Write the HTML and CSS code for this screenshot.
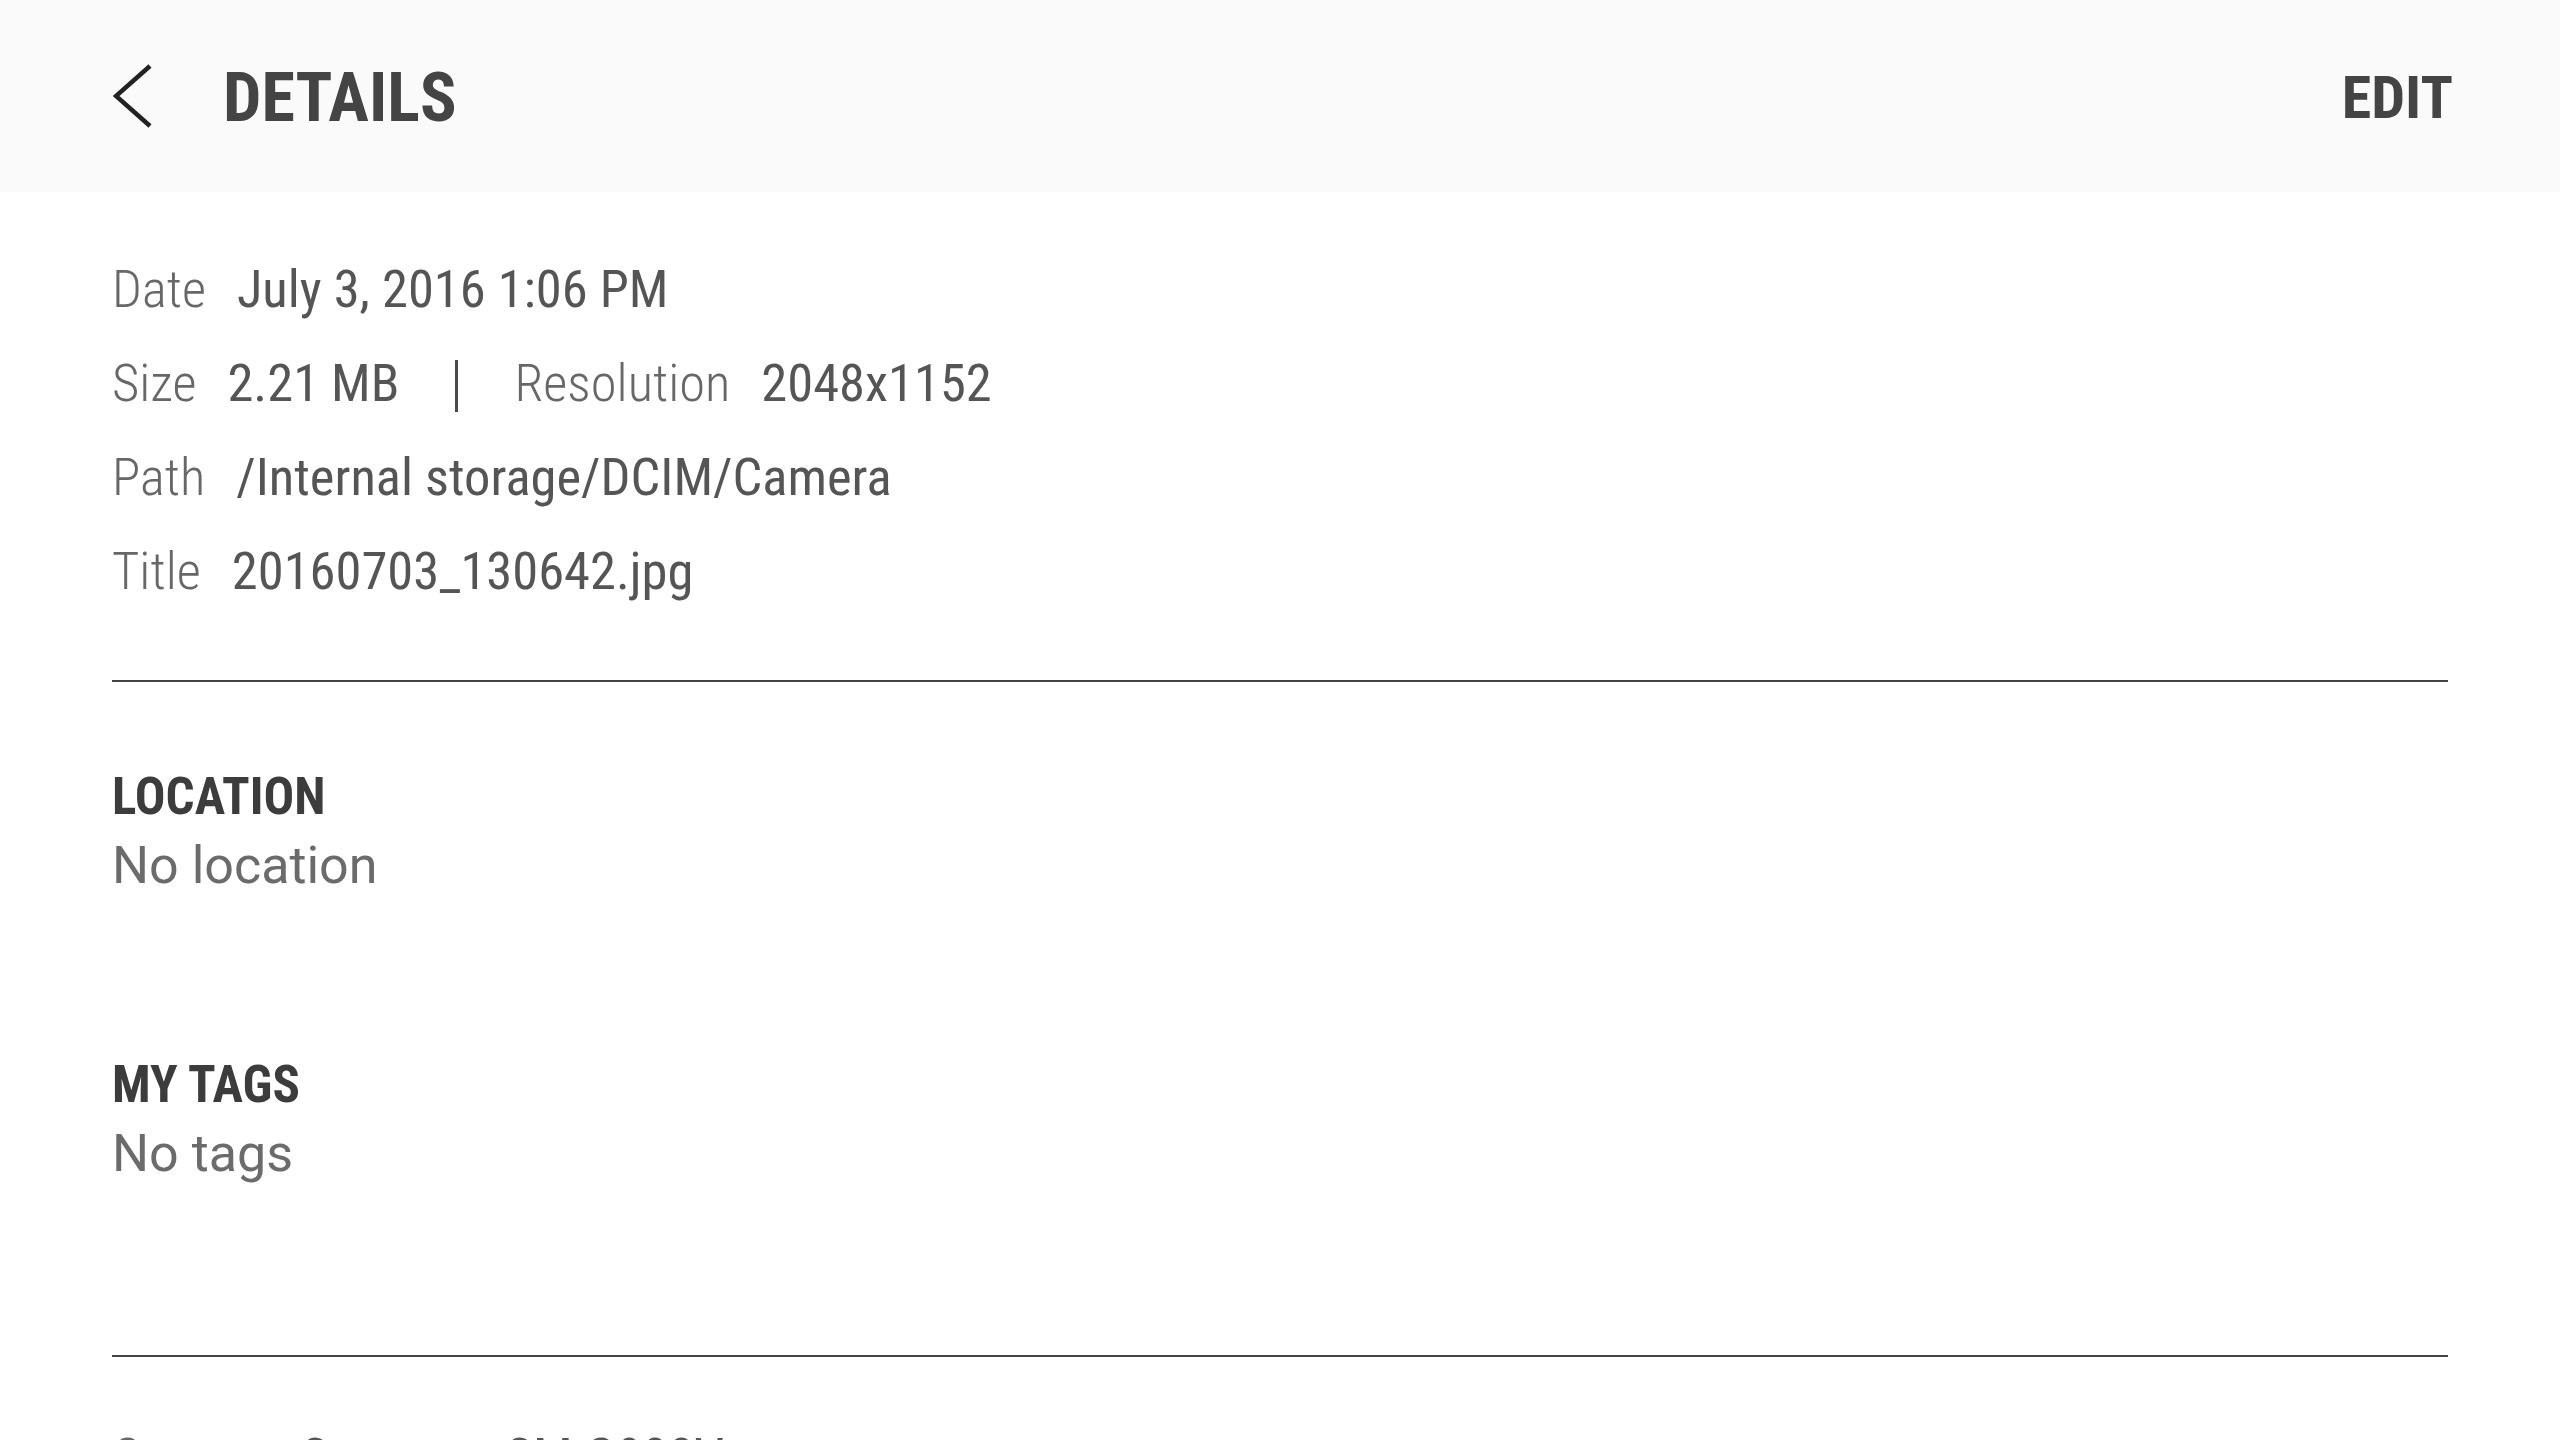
FILE: index.html
```html
<!DOCTYPE html>
<html lang="en">
<head>
<meta charset="utf-8">
<title>Details</title>
<link rel="stylesheet" href="styles.css">
</head>
<body>
<header class="appbar">
  <div class="appbar-left">
    <svg class="back" viewBox="0 0 40 64" width="40" height="64" aria-hidden="true">
      <polyline points="37,2 3,32 37,62" fill="none" stroke="#222" stroke-width="4.5" stroke-linejoin="miter"/>
    </svg>
    <h1 class="title">DETAILS</h1>
  </div>
  <div class="edit">EDIT</div>
</header>
<main class="content">
  <section class="info">
    <div class="row"><span class="label">Date</span><span class="value">July 3, 2016 1:06 PM</span></div>
    <div class="row"><span class="label">Size</span><span class="value">2.21 MB</span><span class="sep"></span><span class="label">Resolution</span><span class="value">2048x1152</span></div>
    <div class="row"><span class="label">Path</span><span class="value">/Internal storage/DCIM/Camera</span></div>
    <div class="row"><span class="label">Title</span><span class="value">20160703_130642.jpg</span></div>
  </section>
  <hr class="divider">
  <section class="block">
    <h2 class="block-title">LOCATION</h2>
    <p class="block-value">No location</p>
  </section>
  <section class="block block-last">
    <h2 class="block-title">MY TAGS</h2>
    <p class="block-value">No tags</p>
  </section>
  <hr class="divider">
  <section class="info info-camera">
    <div class="row"><span class="label">Camera</span><span class="value">Samsung SM-G930V</span></div>
  </section>
</main>
</body>
</html>
```
FILE: styles.css
```css
html, body {
  margin: 0;
  padding: 0;
  height: 1440px;
  overflow: hidden;
  background: #ffffff;
}

body {
  font-family: "Roboto Condensed", Roboto, "Liberation Sans", sans-serif;
  font-stretch: condensed;
  color: #555555;
}

.appbar {
  height: 192px;
  background: #fafafa;
  display: flex;
  align-items: center;
  justify-content: space-between;
  padding: 0 107px 0 114px;
  box-sizing: border-box;
}

.appbar-left {
  display: flex;
  align-items: center;
}

.back {
  display: block;
  width: 40px;
  height: 64px;
  margin-left: -1px;
}

.title {
  margin: 5px 0 0 70px;
  font-size: 68px;
  font-weight: 700;
  color: #444444;
  line-height: 1.172;
}

.edit {
  margin-top: 5px;
  font-size: 60px;
  font-weight: 700;
  color: #444444;
  line-height: 1.172;
}

.content {
  padding: 0 112px;
}

.info {
  padding-top: 50px;
}

.info-camera {
  padding-top: 53px;
}

.row {
  display: flex;
  align-items: baseline;
  height: 94px;
  line-height: 94px;
  font-size: 52.5px;
  white-space: nowrap;
}

.label {
  font-weight: 300;
  color: #676767;
}

.value {
  font-weight: 400;
  color: #555555;
  margin-left: 31px;
}

.sep {
  display: inline-block;
  width: 3px;
  height: 52px;
  background: #4a4a4a;
  margin: 0 56px;
  align-self: center;
  transform: translateY(3px);
}

.divider {
  margin: 62px 0 0;
  border: 0;
  height: 2px;
  background: #444444;
}

.block {
  padding-top: 83px;
  padding-bottom: 72px;
}

.block-last {
  padding-bottom: 169px;
}

.block-last + .divider {
  margin-top: 0;
}

.block-title {
  margin: 0;
  font-size: 51px;
  font-weight: 700;
  color: #3c3c3c;
  line-height: 64px;
}

.block-value {
  margin: 5px 0 0;
  font-family: Roboto, "Liberation Sans", sans-serif;
  font-stretch: normal;
  font-size: 52px;
  font-weight: 400;
  color: #6b6b6b;
  line-height: 64px;
}
```
